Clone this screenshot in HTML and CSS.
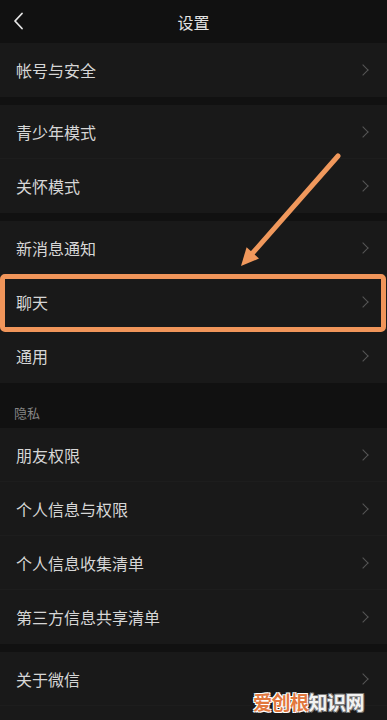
FILE: index.html
```html
<html>
<head>
    <meta charset="utf-8">
    <link rel="stylesheet" href="styles.css">
</head>
<body>
    <div class="page">
        <header class="topbar">
            <svg class="back" width="12" height="18" viewBox="0 0 12 18">
                <path d="M9 1.5 L2 9 L9 16.5" fill="none" stroke="#e6e6e6" stroke-width="1.8" stroke-linecap="round" stroke-linejoin="round"/>
            </svg>
            <span class="title">设置</span>
        </header>

        <ul class="group">
            <li class="row">帐号与安全<i class="chev"></i></li>
        </ul>

        <ul class="group">
            <li class="row">青少年模式<i class="chev"></i></li>
            <li class="row">关怀模式<i class="chev"></i></li>
        </ul>

        <ul class="group">
            <li class="row">新消息通知<i class="chev"></i></li>
            <li class="row highlight">聊天<i class="chev"></i><span class="frame"></span></li>
            <li class="row">通用<i class="chev"></i></li>
        </ul>

        <div class="section-label">隐私</div>
        <ul class="group">
            <li class="row">朋友权限<i class="chev"></i></li>
            <li class="row">个人信息与权限<i class="chev"></i></li>
            <li class="row">个人信息收集清单<i class="chev"></i></li>
            <li class="row">第三方信息共享清单<i class="chev"></i></li>
        </ul>

        <ul class="group">
            <li class="row">关于微信<i class="chev"></i></li>
            <li class="row"></li>
        </ul>

        <svg class="pointer" width="387" height="720" viewBox="0 0 387 720">
            <line x1="338" y1="156" x2="250" y2="256" stroke="#f0985c" stroke-width="5" stroke-linecap="round"/>
            <polygon points="241,266 246.6,247.2 259,258.6" fill="#f0985c"/>
        </svg>

        <div class="watermark"><span class="wm-a">爱创根</span><span class="wm-b">知识网</span></div>
    </div>
</body>
</html>
```

FILE: styles.css
```css
html, body {
    margin: 0;
    padding: 0;
    width: 100%;
    height: 100%;
    overflow: hidden;
    background-color: #111111;
}
body {
    font-family: "Noto Sans CJK SC", "Noto Sans", sans-serif;
    color: #d9d9d9;
}
.page {
    position: relative;
    width: 387px;
    height: 720px;
    overflow: hidden;
}
.topbar {
    height: 43px;
    display: flex;
    align-items: center;
    justify-content: center;
    background-color: #111111;
    position: relative;
}
.back {
    position: absolute;
    left: 13px;
    top: 12px;
}
.title {
    font-size: 16px;
    color: #e4e4e4;
}
.group {
    list-style: none;
    margin: 0 0 8px 0;
    padding: 0;
    background-color: #191919;
}
.row {
    position: relative;
    height: 54px;
    display: flex;
    align-items: center;
    padding: 0 16px;
    font-size: 16px;
    color: #d6d6d6;
    border-bottom: 1px solid #1d1d1d;
    box-sizing: border-box;
}
.row:last-child {
    border-bottom: none;
}
.chev {
    margin-left: auto;
    width: 7px;
    height: 7px;
    border-top: 1.5px solid #565656;
    border-right: 1.5px solid #565656;
    transform: rotate(45deg);
    margin-right: 4px;
}
.section-label {
    height: 45px;
    margin-top: -8px;
    box-sizing: border-box;
    padding: 20px 0 0 14px;
    font-size: 13px;
    color: #858585;
}
.frame {
    position: absolute;
    left: 0;
    right: 1px;
    top: -1px;
    bottom: -4px;
    border: 5px solid #f0955a;
    border-radius: 5px;
}
.pointer {
    position: absolute;
    left: 0;
    top: 0;
    pointer-events: none;
}
.watermark {
    position: absolute;
    left: 253px;
    top: 688px;
    font-size: 19px;
    font-weight: bold;
    letter-spacing: -0.5px;
}
.wm-a {
    color: #e2783e;
    text-shadow: -1px -1px 0 #fff, 1px -1px 0 #fff, -1px 1px 0 #fff, 1px 1px 0 #fff;
}
.wm-b {
    color: #f2f2f2;
    text-shadow: -1px -1px 0 #777, 1px -1px 0 #777, -1px 1px 0 #777, 1px 1px 0 #777;
}
```
